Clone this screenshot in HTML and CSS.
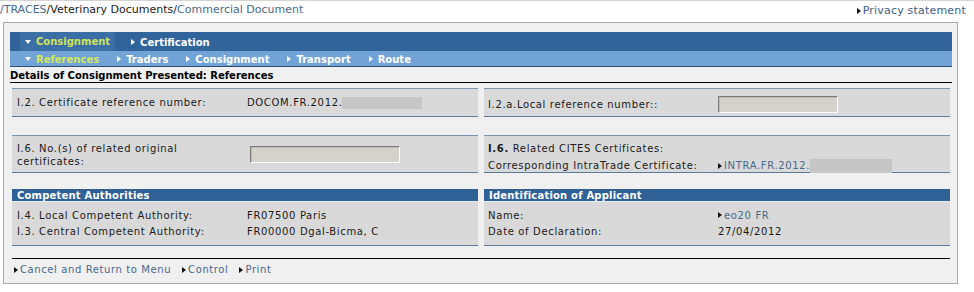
FILE: index.html
```html
<!DOCTYPE html>
<html>
<head>
<meta charset="utf-8">
<link rel="stylesheet" href="styles.css">
</head>
<body>
<div class="topbar">
  <div class="crumbs"><span class="lnk">/TRACES</span>/Veterinary Documents/<span class="lnk">Commercial Document</span></div>
  <div class="privacy"><i class="tri-r dark"></i>Privacy statement</div>
</div>
<div class="box">
  <div class="tabs">
    <div class="tabrow main">
      <span class="tab active"><i class="tri-d"></i>Consignment</span>
      <span class="tab"><i class="tri-r"></i>Certification</span>
    </div>
    <div class="tabrow sub">
      <span class="tab active"><i class="tri-d"></i>References</span>
      <span class="tab"><i class="tri-r"></i>Traders</span>
      <span class="tab"><i class="tri-r"></i>Consignment</span>
      <span class="tab"><i class="tri-r"></i>Transport</span>
      <span class="tab"><i class="tri-r"></i>Route</span>
    </div>
  </div>
  <div class="heading">Details of Consignment Presented: References</div>

  <div class="grid row1">
    <div class="panel">
      <div class="line p1">
        <span class="lab">I.2. Certificate reference number:</span>
        <span class="val">DOCOM.FR.2012.<span class="blur b1"></span></span>
      </div>
    </div>
    <div class="panel">
      <div class="line p1r">
        <span class="lab">I.2.a.Local reference number::</span>
        <span class="val"><span class="input w120"></span></span>
      </div>
    </div>
  </div>

  <div class="grid row2">
    <div class="panel">
      <div class="line p2">
        <span class="lab two">I.6. No.(s) of related original certificates:</span>
        <span class="val"><span class="input w150"></span></span>
      </div>
    </div>
    <div class="panel p2r">
      <div class="line r17"><span><b>I.6.</b> Related CITES Certificates:</span></div>
      <div class="line r17">
        <span class="lab">Corresponding IntraTrade Certificate:</span>
        <span class="val lnk"><i class="tri-r dark"></i>INTRA.FR.2012.<span class="blur b2"></span></span>
      </div>
    </div>
  </div>

  <div class="grid row3">
    <div class="sect">
      <div class="sect-h">Competent Authorities</div>
      <div class="sect-b">
        <div class="line r16"><span class="lab">I.4. Local Competent Authority:</span><span class="val">FR07500 Paris</span></div>
        <div class="line r16"><span class="lab">I.3. Central Competent Authority:</span><span class="val">FR00000 Dgal-Bicma, C</span></div>
      </div>
    </div>
    <div class="sect">
      <div class="sect-h">Identification of Applicant</div>
      <div class="sect-b right">
        <div class="line r16"><span class="lab">Name:</span><span class="val lnk"><i class="tri-r dark"></i>eo20 FR</span></div>
        <div class="line r16"><span class="lab">Date of Declaration:</span><span class="val">27/04/2012</span></div>
      </div>
    </div>
  </div>

  <div class="footer">
    <span class="flink"><i class="tri-r dark"></i>Cancel and Return to Menu</span>
    <span class="flink"><i class="tri-r dark"></i>Control</span>
    <span class="flink"><i class="tri-r dark"></i>Print</span>
  </div>
</div>
</body>
</html>
```
FILE: styles.css
```css
* { box-sizing: border-box; }
body {
  margin: 0;
  background: #fff;
  font-family: "DejaVu Sans", Verdana, sans-serif;
  font-size: 10px;
  color: #1a1a1a;
}
i { display: inline-block; }
.tri-r {
  width: 0; height: 0;
  border-top: 3px solid transparent;
  border-bottom: 3px solid transparent;
  border-left: 4px solid #fff;
  margin-right: 5px;
  vertical-align: 0px;
}
.tri-r.dark { border-left-color: #111; margin-right: 2px; }
.tri-d {
  width: 0; height: 0;
  border-left: 3px solid transparent;
  border-right: 3px solid transparent;
  border-top: 4px solid #fff;
  margin-right: 5px;
  vertical-align: 2px;
}
.lnk { color: #48698c; }

.topbar {
  display: flex;
  justify-content: space-between;
  align-items: center;
  height: 18px;
  border-top: 1px solid #d4d4d4;
  font-size: 11px;
  padding-right: 8px;
}
.privacy { color: #3d6088; padding-top: 2px; letter-spacing: 0.2px; }

.box {
  margin: 4px 16px 0 3px;
  height: 262px;
  border: 1px solid #a9a9a9;
  background: #f0f0f0;
  padding: 9px 5px 0 6px;
}

.tabrow { display: flex; align-items: center; font-weight: bold; color: #fff; }
.tabrow.main { height: 19px; background: #31649a; padding-left: 10px; padding-top: 1px; }
.tabrow.main .tab { height: 18px; display: flex; align-items: center; padding: 0 5px; }
.tabrow.main .tab.active { background: #3d6fa7; color: #cfe35a; margin-right: 11px; height: 19px; margin-top: -1px; }
.tabrow.sub {
  height: 16px;
  background: #72a3d6;
  border-bottom: 1px solid #2b4f78;
  padding-left: 15px;
  padding-top: 1px;
}
.tabrow.sub .tab { margin-right: 18px; display: flex; align-items: center; }
.tabrow.sub .tab.active { color: #d4e85c; }

.heading {
  height: 16px;
  line-height: 14px;
  padding-top: 2px;
  font-weight: bold;
  color: #000;
  border-bottom: 1px solid #000;
}

.grid {
  display: grid;
  grid-template-columns: 466px 466px;
  column-gap: 6px;
  margin: 0 2px;
  letter-spacing: 0.65px;
}
.row1 { margin-top: 5px; }
.row2 { margin-top: 18px; }
.row3 { margin-top: 16px; }

.panel {
  background: #d9d9d9;
  border-top: 1px solid #7b95b1;
  border-bottom: 1px solid #5b7b9d;
}
.line { display: flex; align-items: center; }
.lab { width: 230px; flex: none; }
.val { display: flex; align-items: center; }
.p1 { height: 27px; padding: 0 5px; line-height: 13px; }
.p1r { height: 27px; padding: 3px 4px 0 4px; }
.p2 { height: 36px; padding: 1px 5px 0 5px; line-height: 13px; }
.lab.two { width: 195px; margin-right: 38px; }
.p2r { height: 38px; padding: 4px 4px 0 4px; }
.r17 { height: 17px; }
.r16 { height: 16px; }
.p2r .lab { width: 230px; }

.blur { display: inline-block; background: #c6c6c6; }
.b1 { width: 80px; height: 12px; }
.b2 { width: 82px; height: 14px; }

.input {
  display: inline-block;
  height: 17px;
  background: #d5d2cc;
  border: 1px solid;
  border-color: #7a7a7a #fbfbfb #fbfbfb #7a7a7a;
  box-shadow: inset 1px 1px 0 #bdbbb6;
}
.w120 { width: 120px; }
.w150 { width: 150px; }

.sect-h {
  height: 13px;
  line-height: 13px;
  background: #2f6096;
  color: #fff;
  font-weight: bold;
  padding-left: 5px;
  border-bottom: 1px solid #e4ecf4;
  letter-spacing: 0.2px;
}
.sect-b {
  height: 44px;
  background: #d9d9d9;
  border-bottom: 1px solid #5b7b9d;
  padding: 5px 5px 0 5px;
}
.sect-b.right { padding-left: 4px; }

.footer {
  margin: 12px 2px 0 2px;
  border-top: 1px solid #000;
  padding-top: 4px;
  padding-left: 2px;
  line-height: 13px;
  font-size: 10px;
  letter-spacing: 0.6px;
  display: flex;
  gap: 11px;
}
.flink { color: #48698c; }
```
